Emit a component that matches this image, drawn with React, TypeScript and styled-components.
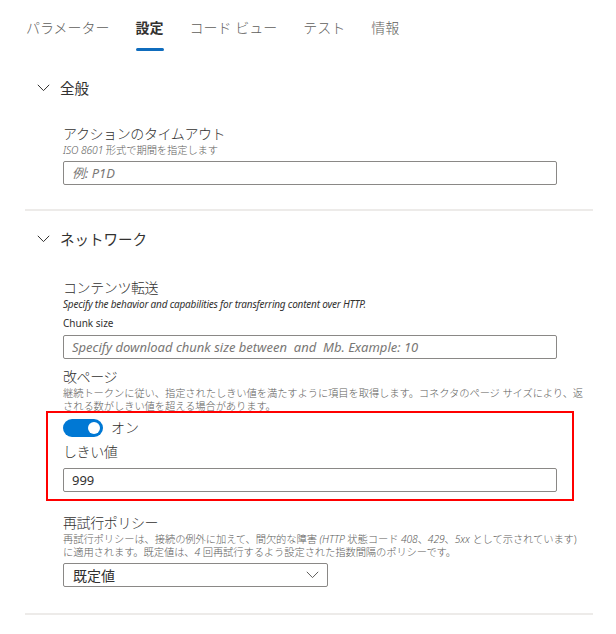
import React from "react";
import styled, { createGlobalStyle } from "styled-components";

const GlobalStyle = createGlobalStyle`
  body {
    margin: 0;
    background: #fff;
    font-family: "Noto Sans", "Noto Sans CJK JP", sans-serif;
    color: #323130;
  }
  * { box-sizing: border-box; }
`;

const tabs = ["パラメーター", "設定", "コード ビュー", "テスト", "情報"];

function Chevron({ small }: { small?: boolean }) {
  return (
    <svg width="13" height="8" viewBox="0 0 13 8" fill="none">
      <polyline points="0.8,0.8 6.5,6.6 12.2,0.8" stroke={small ? "#605e5c" : "#323130"} strokeWidth="1" />
    </svg>
  );
}

export default function App() {
  return (
    <Page>
      <GlobalStyle />
      <TabBar>
        {tabs.map((t) => (
          <Tab key={t} $active={t === "設定"}>
            {t}
          </Tab>
        ))}
      </TabBar>

      <Section>
        <SectionHeader>
          <Chevron />
          <SectionTitle>全般</SectionTitle>
        </SectionHeader>
        <SectionBody>
          <FieldTitle>アクションのタイムアウト</FieldTitle>
          <Hint>
            <i>ISO 8601</i> 形式で期間を指定します
          </Hint>
          <TextInput $top={4} placeholder="例: P1D" />
        </SectionBody>
      </Section>

      <Section>
        <SectionHeader>
          <Chevron />
          <SectionTitle>ネットワーク</SectionTitle>
        </SectionHeader>
        <SectionBody>
          <FieldTitle>コンテンツ転送</FieldTitle>
          <EnHint>Specify the behavior and capabilities for transferring content over HTTP.</EnHint>
          <SmallLabel>Chunk size</SmallLabel>
          <TextInput
            $top={5}
            placeholder="Specify download chunk size between  and  Mb. Example: 10"
          />

          <FieldTitle $top={8}>改ページ</FieldTitle>
          <Hint>
            継続トークンに従い、指定されたしきい値を満たすように項目を取得します。コネクタのページ サイズにより、返
            <br />
            される数がしきい値を超える場合があります。
          </Hint>

          <Highlight>
            <ToggleRow>
              <Toggle $on>
                <Knob $on />
              </Toggle>
              <ToggleLabel>オン</ToggleLabel>
            </ToggleRow>
            <FieldTitle $top={5}>しきい値</FieldTitle>
            <TextInput $top={6} readOnly defaultValue="999" />
          </Highlight>

          <FieldTitle $top={12}>再試行ポリシー</FieldTitle>
          <Hint>
            再試行ポリシーは、接続の例外に加えて、間欠的な障害 <i>(HTTP</i> 状態コード <i>408</i>、<i>429</i>、
            <i>5xx</i> として示されています)
            <br />
            に適用されます。既定値は、<i>4</i> 回再試行するよう設定された指数間隔のポリシーです。
          </Hint>
          <Select>
            <span>既定値</span>
            <Chevron small />
          </Select>
        </SectionBody>
      </Section>
    </Page>
  );
}

const Page = styled.div`
  width: 616px;
  min-height: 634px;
  padding: 18px 23px 0 25px;
`;

const TabBar = styled.div`
  display: flex;
  gap: 26px;
  padding-left: 1px;
`;

const Tab = styled.div<{ $active?: boolean }>`
  position: relative;
  height: 33px;
  font-size: 14px;
  line-height: 20px;
  white-space: nowrap;
  color: ${(p) => (p.$active ? "#323130" : "#605e5c")};
  font-weight: ${(p) => (p.$active ? 600 : 300)};
  &::after {
    content: "";
    display: ${(p) => (p.$active ? "block" : "none")};
    position: absolute;
    left: 0;
    right: 0;
    bottom: 0;
    height: 3px;
    border-radius: 2px;
    background: #0f6cbd;
  }
`;

const Section = styled.section`
  border-bottom: 2px solid #edebe9;
`;

const SectionHeader = styled.div`
  display: flex;
  align-items: center;
  gap: 10px;
  height: 32px;
  margin-top: 12px;
  padding-left: 12px;
  ${Section}:first-of-type & {
    margin-top: 21px;
  }
`;

const SectionTitle = styled.div`
  font-size: 14.5px;
  line-height: 20px;
  font-weight: 400;
  color: #323130;
`;

const SectionBody = styled.div`
  padding: 20px 0 24px 38px;
  ${Section}:last-of-type & {
    padding-top: 23px;
    padding-bottom: 26px;
  }
`;

const FieldTitle = styled.div<{ $top?: number }>`
  margin-top: ${(p) => p.$top ?? 0}px;
  font-size: 14px;
  line-height: 20px;
  font-weight: 300;
  letter-spacing: -0.4px;
  color: #323130;
`;

const Hint = styled.div`
  font-size: 10.3px;
  line-height: 13px;
  font-weight: 300;
  color: #605e5c;
  white-space: nowrap;
  letter-spacing: -0.1px;
`;

const EnHint = styled.div`
  font-size: 10px;
  line-height: 12px;
  font-style: italic;
  color: #323130;
  white-space: nowrap;
  letter-spacing: -0.2px;
`;

const SmallLabel = styled.div`
  margin-top: 6px;
  font-size: 10px;
  line-height: 14px;
  color: #323130;
`;

const TextInput = styled.input<{ $top?: number }>`
  display: block;
  width: 494px;
  height: 24px;
  margin-top: ${(p) => p.$top ?? 0}px;
  padding: 0 8px;
  border: 1px solid #8a8886;
  border-radius: 2px;
  font-family: "Noto Sans", "Noto Sans CJK JP", sans-serif;
  font-size: 13px;
  color: #323130;
  outline: none;
  background: #fff;
  &::placeholder {
    color: #797775;
    font-style: italic;
  }
`;

const Highlight = styled.div`
  margin: -2px 0 0 -17px;
  width: 528px;
  padding: 6px 15px 7px 15px;
  border: 2px solid #ff0000;
`;

const ToggleRow = styled.div`
  display: flex;
  align-items: center;
  gap: 8px;
  height: 18px;
`;

const Toggle = styled.div<{ $on?: boolean }>`
  display: flex;
  align-items: center;
  justify-content: ${(p) => (p.$on ? "flex-end" : "flex-start")};
  width: 40px;
  height: 18px;
  padding: 0 3px;
  border-radius: 9px;
  background: ${(p) => (p.$on ? "#0078d4" : "#fff")};
`;

const Knob = styled.div<{ $on?: boolean }>`
  width: 12px;
  height: 12px;
  border-radius: 50%;
  background: ${(p) => (p.$on ? "#fff" : "#605e5c")};
`;

const ToggleLabel = styled.span`
  font-size: 14px;
  line-height: 20px;
  font-weight: 300;
  color: #323130;
`;

const Select = styled.div`
  display: flex;
  align-items: center;
  justify-content: space-between;
  width: 265px;
  height: 24px;
  margin-top: 4px;
  padding: 0 8px 0 9px;
  border: 1px solid #8a8886;
  border-radius: 2px;
  font-size: 14px;
  color: #323130;
`;
